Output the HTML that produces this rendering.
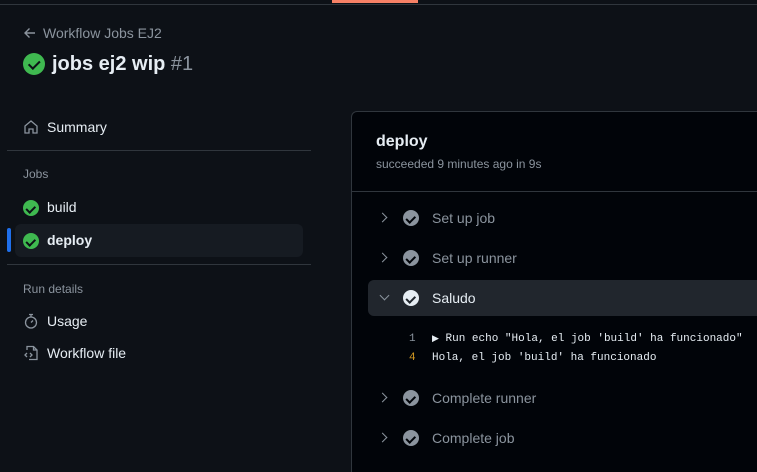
<!DOCTYPE html><html style="overflow:hidden;height:472px"><head><style>
body{margin:0;width:757px;height:472px;background:#0d1117;font-family:"Liberation Sans",sans-serif;position:relative;overflow:hidden;color:#e6edf3}
.a{position:absolute;white-space:nowrap}
.ck{position:absolute;width:16px;height:16px;border-radius:50%;background:#3fb950}
.ck:after{content:"";position:absolute;left:5px;top:3.5px;width:3.5px;height:6.5px;border:solid #0d1117;border-width:0 2px 2px 0;transform:rotate(45deg)}
.big:after{left:8px;top:5px;width:4.5px;height:8.5px;border-width:0 2.4px 2.4px 0}
.g{background:#8b949e}.g:after{border-color:#010409}
.w{background:#e6edf3}.w:after{border-color:#21262d}
.t{font-size:14px;color:#8b949e}
.cv{position:absolute;width:6px;height:6px;border:solid #8b949e;border-width:0 1.6px 1.6px 0;transform:rotate(-45deg)}
.m{font-family:"Liberation Mono",monospace;font-size:11px}
</style></head><body>
<div class="a" style="left:0;top:4px;width:757px;height:1px;background:#30363d"></div>
<div class="a" style="left:332px;top:0;width:86px;height:3px;background:#f78166"></div>
<svg class="a" style="left:23px;top:26px" width="14" height="14" viewBox="0 0 14 14" fill="none" stroke="#8b949e" stroke-width="1.4"><path d="M12 7H2M6.5 2.5 2 7l4.5 4.5"/></svg>
<div class="a" style="left:43px;top:25px;font-size:14px;color:#8b949e">Workflow Jobs EJ2</div>
<div class="ck big" style="left:23px;top:53px;width:22px;height:22px"></div>
<div class="a" style="left:52px;top:53px;font-size:20px;font-weight:bold">jobs ej2 wip <span style="font-weight:normal;color:#8b949e">#1</span></div>
<svg class="a" style="left:23px;top:119px" width="16" height="16" viewBox="0 0 16 16" fill="none" stroke="#8b949e" stroke-width="1.3"><path d="M2 7 8 2l6 5v7H10V10H6v4H2z"/></svg>
<div class="a" style="left:47px;top:119px;font-size:14px">Summary</div>
<div class="a" style="left:7px;top:150px;width:304px;height:1px;background:#30363d"></div>
<div class="a" style="left:23px;top:167px;font-size:12px;color:#8b949e">Jobs</div>
<div class="ck" style="left:23px;top:200px"></div>
<div class="a" style="left:47px;top:199px;font-size:14px">build</div>
<div class="a" style="left:15px;top:224px;width:288px;height:33px;background:#161b22;border-radius:6px"></div>
<div class="a" style="left:7px;top:228px;width:4px;height:24px;background:#1f6feb;border-radius:2px"></div>
<div class="ck" style="left:23px;top:233px"></div>
<div class="a" style="left:47px;top:232px;font-size:14px;font-weight:bold">deploy</div>
<div class="a" style="left:7px;top:264px;width:304px;height:1px;background:#30363d"></div>
<div class="a" style="left:23px;top:282px;font-size:12px;color:#8b949e">Run details</div>
<svg class="a" style="left:23px;top:313px" width="16" height="16" viewBox="0 0 16 16" fill="none" stroke="#8b949e" stroke-width="1.3"><circle cx="8" cy="9.5" r="5.5"/><path d="M6 1.5h4M8 1.5v2.5M8 9.5l2-2"/></svg>
<div class="a" style="left:47px;top:313px;font-size:14px">Usage</div>
<svg class="a" style="left:23px;top:345px" width="16" height="16" viewBox="0 0 16 16" fill="none" stroke="#8b949e" stroke-width="1.3"><path d="M4 5V1.5h6.5L14 5v9.5H6M10.5 1.5V5H14M4 8 2 10l2 2M7 8l2 2-2 2"/></svg>
<div class="a" style="left:47px;top:345px;font-size:14px">Workflow file</div>
<div class="a" style="left:351px;top:111px;width:420px;height:370px;background:#010409;border:1px solid #30363d;border-bottom:none;border-radius:6px 6px 0 0"></div>
<div class="a" style="left:376px;top:133px;font-size:16px;font-weight:bold">deploy</div>
<div class="a" style="left:376px;top:157px;font-size:12px;color:#8b949e">succeeded 9 minutes ago in 9s</div>
<div class="a" style="left:352px;top:191px;width:405px;height:1px;background:#30363d"></div>
<div class="cv" style="left:379px;top:214px"></div><div class="ck g" style="left:403px;top:210px"></div><div class="a t" style="left:432px;top:210px">Set up job</div>
<div class="cv" style="left:379px;top:254px"></div><div class="ck g" style="left:403px;top:250px"></div><div class="a t" style="left:432px;top:250px">Set up runner</div>
<div class="a" style="left:368px;top:280px;width:400px;height:36px;background:#21262d;border-radius:6px"></div>
<div class="cv" style="left:381px;top:292px;transform:rotate(45deg)"></div><div class="ck w" style="left:403px;top:290px"></div><div class="a" style="left:432px;top:290px;font-size:14px">Saludo</div>
<div class="a m" style="left:409px;top:333px;color:#8b949e">1</div><div class="a m" style="left:432px;top:333px"><span style="font-size:9px">▶</span> Run echo "Hola, el job 'build' ha funcionado"</div>
<div class="a m" style="left:409px;top:352px;color:#d29922">4</div><div class="a m" style="left:432px;top:352px">Hola, el job 'build' ha funcionado</div>
<div class="cv" style="left:379px;top:394px"></div><div class="ck g" style="left:403px;top:390px"></div><div class="a t" style="left:432px;top:390px">Complete runner</div>
<div class="cv" style="left:379px;top:434px"></div><div class="ck g" style="left:403px;top:430px"></div><div class="a t" style="left:432px;top:430px">Complete job</div>
</body></html>
